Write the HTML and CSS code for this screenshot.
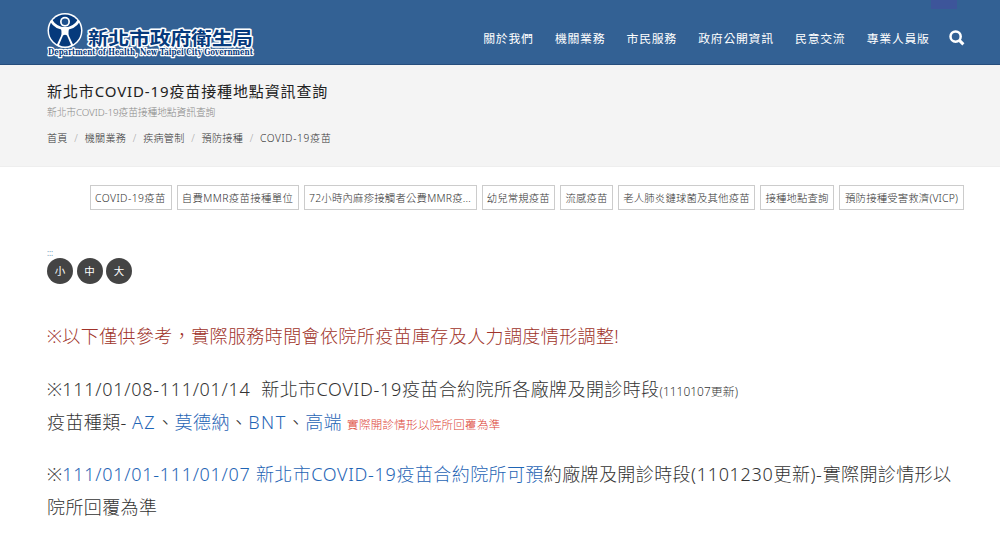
FILE: index.html
```html
<!DOCTYPE html>
<html lang="zh-Hant">
<head>
<meta charset="utf-8">
<title>新北市COVID-19疫苗接種地點資訊查詢</title>
<link rel="stylesheet" href="styles.css">
</head>
<body>
<header class="site-header">
  <span class="top-tab"></span>
  <svg class="logo" width="214" height="50" viewBox="0 0 214 50" role="img" aria-label="新北市政府衛生局">
    <circle cx="20" cy="19.500" r="17.500" fill="#fff"/>
    <circle cx="20" cy="19.500" r="16" fill="#063a7c"/>
    <path d="M6 9.500 Q11 17.500 20 17.500 Q29 17.500 34 9.500" fill="none" stroke="#fff" stroke-width="2.800"/>
    <path d="M16 18 L24 18 Q22.500 23 25 27 L28.500 34.500 Q20 39 11.500 34.500 L15 27 Q17.500 23 16 18 Z" fill="#fff"/>
    <path d="M18 24.500 Q20 23 22 24.500 L26 34 Q20 37 14 34 Z" fill="#063a7c"/>
    <circle cx="20" cy="10.800" r="5" fill="#fff"/>
    <circle cx="20" cy="10.800" r="3.300" fill="#1d508d"/>
    <text class="logo-zh" x="43" y="33.500" textLength="165" lengthAdjust="spacingAndGlyphs">新北市政府衛生局</text>
    <text class="logo-en" x="3" y="44" textLength="205" lengthAdjust="spacingAndGlyphs">Department of Health, New Taipei City Government</text>
  </svg>
  <nav class="nav">
    <a>關於我們</a><a>機關業務</a><a>市民服務</a><a>政府公開資訊</a><a>民意交流</a><a>專業人員版</a>
    <svg class="search" width="16" height="16" viewBox="0 0 16 16"><circle cx="6.600" cy="6.600" r="5.100" fill="none" stroke="#fff" stroke-width="2.500"/><path d="M10.400 10.400 L14.400 14.400" stroke="#fff" stroke-width="3"/></svg>
  </nav>
</header>
<section class="page-title">
  <h1>新北市COVID-19疫苗接種地點資訊查詢</h1>
  <p class="subtitle">新北市COVID-19疫苗接種地點資訊查詢</p>
  <div class="crumbs"><a>首頁</a><i>/</i><a>機關業務</a><i>/</i><a>疾病管制</a><i>/</i><a>預防接種</a><i>/</i><a class="current">COVID-19疫苗</a></div>
</section>
<div class="tags">
  <a class="t1">COVID-19疫苗</a><a class="t2">自費MMR疫苗接種單位</a><a class="t3">72小時內麻疹接觸者公費MMR疫...</a><a class="t4">幼兒常規疫苗</a><a class="t5">流感疫苗</a><a class="t6">老人肺炎鏈球菌及其他疫苗</a><a class="t7">接種地點查詢</a><a class="t8">預防接種受害救濟(VICP)</a>
</div>
<main class="content">
  <div class="anchor">:::</div>
  <div class="sizes"><a>小</a><a>中</a><a>大</a></div>
  <p class="notice">※以下僅供參考，實際服務時間會依院所疫苗庫存及人力調度情形調整!</p>
  <p class="entry">※<span class="latin">111/01/08-111/01/14&nbsp; </span>新北市<span class="latin">COVID-19</span>疫苗合約院所各廠牌及開診時段<small class="updated">(1110107更新)</small><br>疫苗種類- <a><span class="latin wide">AZ</span></a>、<a>莫德納</a>、<a><span class="latin wide">BNT</span></a>、<a>高端</a> <small class="warn">實際開診情形以院所回覆為準</small></p>
  <p class="entry">※<a><span class="latin">111/01/01-111/01/07 </span>新北市<span class="latin">COVID-19</span>疫苗合約院所可預</a>約廠牌及開診時段<span class="latin">(1101230</span>更新<span class="latin">)-</span>實際開診情形以<br>院所回覆為準</p>
</main>
</body>
</html>
```

FILE: styles.css
```css
* { box-sizing: border-box; }
body {
  margin: 0;
  height: 539px;
  overflow: hidden;
  background: #fff;
  color: #333;
  font-family: "Noto Sans", "Noto Sans CJK TC", sans-serif;
  font-weight: 300;
  white-space: nowrap;
}
h1, p { margin: 0; }
.site-header {
  position: relative;
  display: flex;
  justify-content: space-between;
  height: 65px;
  padding: 11px 35px 0 45px;
  background: #336194;
  border-bottom: 1px solid #254d7c;
}
.top-tab { position: absolute; left: 931px; top: 0; width: 26px; height: 9px; background: #3d559a; }
.logo { display: block; overflow: visible; }
.logo-zh, .logo-en { fill: #063a7c; stroke: #fff; stroke-linejoin: round; paint-order: stroke; }
.logo-zh { font: 700 18.5px "Noto Sans CJK TC", sans-serif; stroke-width: 3px; }
.logo-en { font: 700 8.5px "DejaVu Serif", serif; stroke-width: 2.5px; }
.nav {
  display: flex;
  gap: 21.3px;
  height: 54px;
  line-height: 54px;
  color: #fff;
  font-size: 11.9px;
  font-weight: 400;
  letter-spacing: .7px;
}
.search { margin: 19px 0 0 -2px; }
.page-title { height: 102px; padding: 15px 47px 0; background: #f4f4f4; border-bottom: 1px solid #eee; }
h1 { height: 22px; line-height: 22px; font-size: 15px; font-weight: 400; letter-spacing: .88px; color: #222; }
.subtitle { height: 22px; line-height: 22px; font-size: 9.8px; color: #888; letter-spacing: -.12px; }
.crumbs { display: flex; gap: 6.6px; line-height: 28px; font-size: 10.1px; letter-spacing: .27px; color: #333; }
.crumbs i { font-style: normal; color: #aaa; }
.crumbs .current { letter-spacing: .65px; }
.tags { display: flex; justify-content: flex-end; gap: 5px; padding: 18px 36px 0 0; }
.tags a {
  height: 25px;
  line-height: 24px;
  border: 1px solid #ccc;
  font-size: 10.4px;
  letter-spacing: .15px;
  text-align: center;
}
.tags .t1 { width: 82px; letter-spacing: .4px; }
.tags .t2 { width: 122px; letter-spacing: .35px; }
.tags .t3 { width: 173px; letter-spacing: .2px; }
.t4 { width: 73.5px; }
.t5 { width: 53px; }
.t6 { width: 137px; }
.t7 { width: 74px; }
.t8 { width: 125px; }
.content { padding: 37px 0 0 47px; font-size: 18px; letter-spacing: .4px; }
.anchor { height: 11px; line-height: 11px; font-size: 8px; font-weight: 400; letter-spacing: -.2px; color: #6b94b8; }
.sizes { display: flex; gap: 3.5px; }
.sizes a {
  width: 26px;
  height: 26px;
  line-height: 26px;
  border-radius: 50%;
  background: #444;
  color: #fff;
  font-size: 10.5px;
  font-weight: 400;
  letter-spacing: 0;
  text-align: center;
}
.notice { margin-top: 36px; line-height: 33px; color: #a0332a; }
.entry { margin-top: 19.7px; line-height: 33px; }
.entry a { color: #1f65b5; }
.latin { letter-spacing: .71px; }
.wide { letter-spacing: 1.5px; }
small { line-height: 1; letter-spacing: .05px; }
.updated { font-size: 11.9px; }
.warn { font-size: 11.5px; letter-spacing: .3px; color: #dc4134; }
```
